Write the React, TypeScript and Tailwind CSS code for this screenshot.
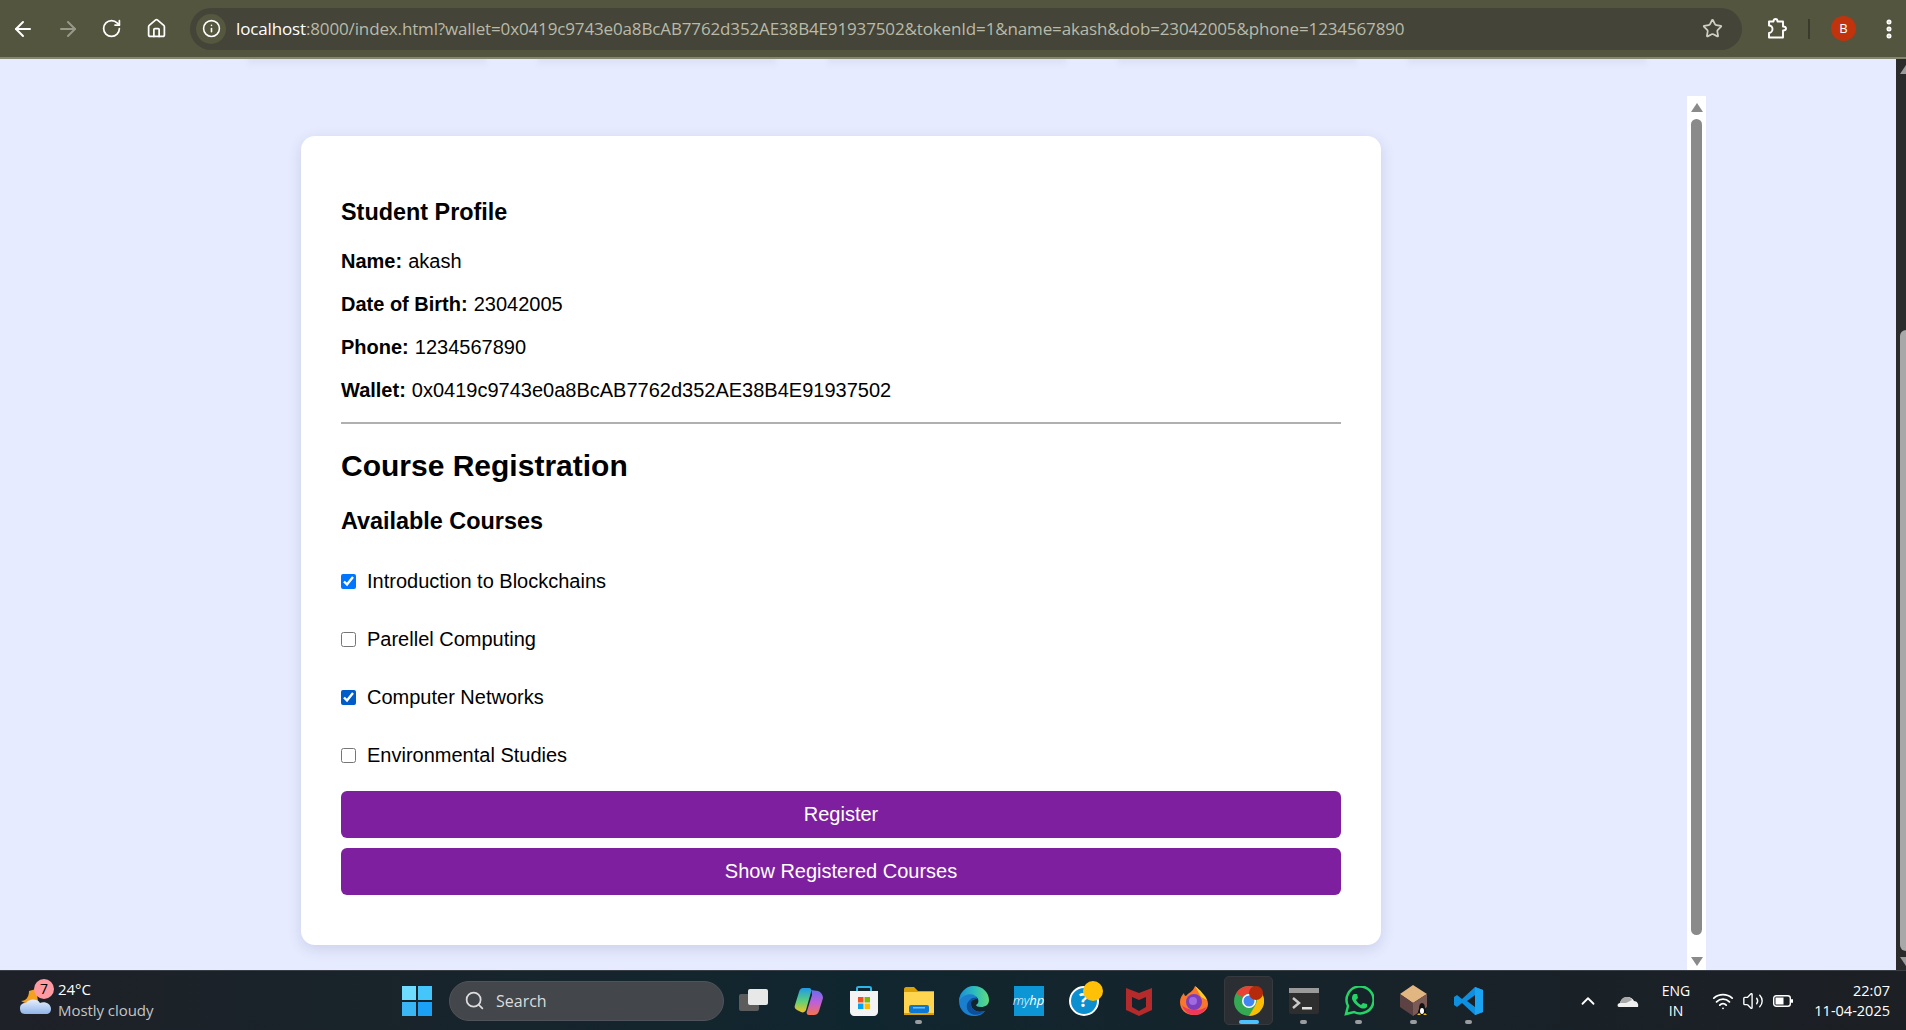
import type { ReactNode } from 'react';
import { ArrowLeft, ArrowRight, RotateCw, Home, Info, Star, EllipsisVertical, Search, ChevronUp, Wifi, Volume2 } from 'lucide-react';

const courses = [
  { name: 'Introduction to Blockchains', checked: true, accent: 'accent-[#0075ff]' },
  { name: 'Parellel Computing', checked: false, accent: 'accent-[#0075ff]' },
  { name: 'Computer Networks', checked: true, accent: 'accent-[#005cc8]' },
  { name: 'Environmental Studies', checked: false, accent: 'accent-[#0075ff]' },
];

const profile = [
  ['Name:', 'akash'],
  ['Date of Birth:', '23042005'],
  ['Phone:', '1234567890'],
  ['Wallet:', '0x0419c9743e0a8BcAB7762d352AE38B4E91937502'],
];

function Toolbar() {
  return (
    <header className="h-[59px] shrink-0 flex items-center bg-[#54553f] border-b-2 border-[#85866f] font-['Open_Sans',sans-serif]">
      <div className="w-[190px] shrink-0 flex items-center pl-[11px] gap-[21px] text-white">
        <ArrowLeft size={24} strokeWidth={2} />
        <ArrowRight size={24} strokeWidth={2} className="text-[#98998a]" />
        <RotateCw size={21} strokeWidth={2} />
        <Home size={21} strokeWidth={2} className="ml-[3px]" />
      </div>
      <div className="w-[1552px] h-[42px] shrink-0 rounded-full bg-[#444438] flex items-center pl-[6px] pr-[19px]">
        <div className="w-[30px] h-[30px] rounded-full bg-[#56573f] flex items-center justify-center text-white">
          <Info size={19} strokeWidth={2} />
        </div>
        <div className="ml-[10px] flex-1 text-[17px] tracking-[-0.14px] text-[#b9baa9] whitespace-nowrap">
          <span className="text-white">localhost</span>:8000/index.html?wallet=0x0419c9743e0a8BcAB7762d352AE38B4E91937502&tokenId=1&name=akash&dob=23042005&phone=1234567890
        </div>
        <Star size={21} strokeWidth={2} className="text-[#cfcfc2]" />
      </div>
      <div className="flex-1 flex items-center text-white pl-[24px]">
        <svg width="21" height="21" viewBox="0 0 21 21" fill="none" stroke="currentColor" strokeWidth="1.9" strokeLinejoin="round">
          <path d="M3 3.500 H7.500 C7.500 1.500 8.500 1 9.500 1 C10.500 1 11.500 1.500 11.500 3.500 H17 V8.500 C19 8.500 20 9.500 20 10.500 C20 11.500 19 12.500 17 12.500 V19.500 H3 V15 C5 15 6.500 13 6.500 11 C6.500 9 5 7.500 3 7.500 Z" />
        </svg>
        <div className="w-[2px] h-[20px] bg-[#3a3b2c] ml-[21px]" />
        <div className="w-[25px] h-[25px] rounded-full bg-[#c1330c] ml-[21px] flex items-center justify-center text-[13px]">B</div>
        <EllipsisVertical size={24} strokeWidth={3} className="ml-[21px]" />
      </div>
    </header>
  );
}

function Card() {
  return (
    <section className="w-[1080px] h-[809px] mt-[77px] shrink-0 bg-white rounded-[14px] px-10 pt-[62px] shadow-[0_4px_14px_rgba(60,70,120,0.16)] font-['Liberation_Sans',sans-serif] text-black">
      <h3 className="text-[23.4px] leading-[28px] font-bold mb-[13px]">Student Profile</h3>
      {profile.map(([label, value]) => (
        <p key={label} className="h-[43px] flex items-center text-[20px] gap-[6px] whitespace-nowrap">
          <strong>{label}</strong>
          <span>{value}</span>
        </p>
      ))}
      <hr className="mt-[11px] border-0 h-[2px] bg-[#b0b0b0]" />
      <h2 className="mt-[24px] text-[30px] leading-[36px] font-bold">Course Registration</h2>
      <h3 className="mt-[23px] text-[23.4px] leading-[28px] font-bold">Available Courses</h3>
      <div className="mt-[17px]">
        {courses.map((course) => (
          <label key={course.name} className="h-[58px] flex items-center gap-[11px] text-[20px]">
            <input type="checkbox" defaultChecked={course.checked} className={`w-[15px] h-[15px] ${course.accent}`} />
            <span>{course.name}</span>
          </label>
        ))}
      </div>
      <button className="mt-[7px] w-full h-[47px] pb-[2px] rounded-[6px] bg-[#7e1fa0] text-white text-[20px]">Register</button>
      <button className="mt-[10px] w-full h-[47px] pb-[2px] rounded-[6px] bg-[#7e1fa0] text-white text-[20px]">Show Registered Courses</button>
    </section>
  );
}

function InnerScrollbar() {
  return (
    <div className="ml-[306px] mt-[37px] w-[19px] shrink-0 bg-white flex flex-col items-center">
      <div className="mt-[7px] w-0 h-0 border-x-[6px] border-x-transparent border-b-[9px] border-b-[#8a8a8a]" />
      <div className="mt-[7px] w-[11px] flex-1 rounded-full bg-[#8a8a8a]" />
      <div className="mt-[22px] mb-[4px] w-0 h-0 border-x-[6px] border-x-transparent border-t-[9px] border-t-[#8a8a8a]" />
    </div>
  );
}

// the window's own scrollbar runs off the right edge of the shot
function OuterScrollbar() {
  return (
    <div className="ml-auto w-[10px] shrink-0 bg-[#2b2b2b] overflow-hidden">
      <div className="w-[20px] h-full flex flex-col items-center">
        <div className="mt-[6px] w-0 h-0 border-x-[6px] border-x-transparent border-b-[9px] border-b-[#9a9a9a]" />
        <div className="mt-[256px] w-[12px] flex-1 rounded-full bg-[#a8a8a8]" />
        <div className="mt-[6px] mb-[4px] w-0 h-0 border-x-[6px] border-x-transparent border-t-[9px] border-t-[#9a9a9a]" />
      </div>
    </div>
  );
}

function Weather() {
  return (
    <div className="w-[402px] shrink-0 flex items-center pl-[19px]">
      <div className="relative w-[33px] h-[44px] shrink-0">
        <svg width="33" height="44" viewBox="0 0 33 44">
          <defs>
            <linearGradient id="cloud" x1="0" y1="0" x2="0" y2="1">
              <stop offset="0" stopColor="#e6eefc" />
              <stop offset="1" stopColor="#8fb4ea" />
            </linearGradient>
          </defs>
          <path d="M2 22 C6 22 10 19 10 12 L17 10 L19 22 L10 26 Z" fill="#f3a11f" />
          <path d="M6 35 C2 35 1 32 1 29 C1 26 3 24 7 24 C9 20 18 19 21 24 C26 22 32 25 32 30 C32 33 30 35 27 35 Z" fill="url(#cloud)" />
        </svg>
        <div className="absolute left-[15px] top-0 w-[20px] h-[20px] rounded-full bg-[#ff9aa2] text-black text-[14px] flex items-center justify-center">7</div>
      </div>
      <div className="ml-[6px] -mt-[1px] text-[15px] leading-[21px] tracking-[-0.05px]">
        <div className="text-white">24°C</div>
        <div className="text-[#c4c5c7]">Mostly cloudy</div>
      </div>
    </div>
  );
}

function AppSlot({ children, dot, active }: { children: ReactNode; dot?: boolean; active?: boolean }) {
  return (
    <div className={`relative w-[49px] h-[49px] mx-[3px] rounded-[5px] flex items-center justify-center ${active ? 'bg-[#2b2f34] border border-[#363a3f]' : ''}`}>
      {children}
      {dot && <div className="absolute bottom-[1px] left-[21px] w-[7px] h-[4px] rounded-full bg-[#9a9da0]" />}
      {active && <div className="absolute bottom-0 left-[14px] w-[20px] h-[4px] rounded-full bg-[#4cc2ff]" />}
    </div>
  );
}

function TaskApps() {
  return (
    <div className="flex items-center">
      <AppSlot>
        <svg width="32" height="32" viewBox="0 0 32 32">
          <rect x="1" y="9" width="20" height="17" rx="2" fill="#5c5c5c" />
          <rect x="10" y="4" width="20" height="16" rx="2" fill="#e8e8e8" />
        </svg>
      </AppSlot>
      <AppSlot>
        <svg width="30" height="30" viewBox="0 0 30 30">
          <defs>
            <linearGradient id="copilotA" x1="0.500" y1="0" x2="0.500" y2="1">
              <stop offset="0" stopColor="#1f9ae8" />
              <stop offset="0.550" stopColor="#5fd07a" />
              <stop offset="1" stopColor="#f5c21f" />
            </linearGradient>
            <linearGradient id="copilotB" x1="0.500" y1="0" x2="0.500" y2="1">
              <stop offset="0" stopColor="#6a6cf0" />
              <stop offset="0.500" stopColor="#c05fd8" />
              <stop offset="1" stopColor="#f5734e" />
            </linearGradient>
          </defs>
          <path d="M9 2 H15 C17 2 18 4 17 6 L12 24 C11 26 9 27 7 26 L3 24 C1 23 0 21 1 19 L5 6 C6 3 7 2 9 2 Z" fill="url(#copilotA)" />
          <path d="M17 4 L24 5 C27 6 29 9 29 12 L25 25 C24 28 22 29 20 29 H15 C13 29 12 27 13 25 L18 9 C18 7 18 5 17 4 Z" fill="url(#copilotB)" />
        </svg>
      </AppSlot>
      <AppSlot>
        <svg width="30" height="30" viewBox="0 0 30 30">
          <path d="M8 6 V2 C8 1 9 1 9.500 1 H20.500 C21 1 22 1 22 2 V6" fill="none" stroke="#2db4e8" strokeWidth="2" />
          <path d="M1 5 H29 V26 C29 28 27 30 25 30 H5 C3 30 1 28 1 26 Z" fill="#f4f4f4" />
          <rect x="9" y="11" width="5.500" height="5.500" fill="#f25022" />
          <rect x="15.500" y="11" width="5.500" height="5.500" fill="#7fba00" />
          <rect x="9" y="17.500" width="5.500" height="5.500" fill="#00a4ef" />
          <rect x="15.500" y="17.500" width="5.500" height="5.500" fill="#ffb900" />
        </svg>
      </AppSlot>
      <AppSlot dot>
        <svg width="30" height="28" viewBox="0 0 30 28">
          <path d="M0 2 C0 1 1 0 2 0 H10 L14 4 H30 V27 H0 Z" fill="#d9a007" />
          <rect x="0" y="5" width="30" height="21" fill="#ffd54f" />
          <rect x="5" y="18" width="20" height="8" rx="2" fill="#0a78d4" />
          <rect x="9" y="20" width="12" height="1.500" fill="#6cc0f5" />
          <rect x="0" y="26" width="30" height="2" fill="#d9a007" />
        </svg>
      </AppSlot>
      <AppSlot>
        <svg width="30" height="30" viewBox="0 0 30 30">
          <defs>
            <linearGradient id="edgeTop" x1="0" y1="0.500" x2="1" y2="0.500">
              <stop offset="0" stopColor="#1b8ed8" />
              <stop offset="0.550" stopColor="#2ebfb8" />
              <stop offset="1" stopColor="#62da7c" />
            </linearGradient>
          </defs>
          <path d="M15 0 A15 15 0 0 0 0 15 C0 24 7 30 15 30 C20 30 24 28 26 25 C20 27 13 25 12 19 C11 15 14 13 18 13 Z" fill="#1b7fd0" />
          <path d="M12 19 C13 25 20 27 26 25 C22 29 15 30 11 27 C7 24 6 17 12 13 C15 11 18 12 18 13 C14 13 11 15 12 19 Z" fill="#0d4f9a" />
          <path d="M15 0 C24 0 30 7 30 14 C30 19 26 21 22 21 C19 21 17 20 17 19 C19 18 20 16 19 13 C17 8 10 7 5 10 C3 11 1 13 0 15 C1 6 8 0 15 0 Z" fill="url(#edgeTop)" />
        </svg>
      </AppSlot>
      <AppSlot>
        <div className="w-[30px] h-[30px] bg-[#0d96d6] flex items-center justify-center text-white text-[13px] italic font-['Open_Sans',sans-serif]">
          <span className="font-light">my</span>
          <span>hp</span>
        </div>
      </AppSlot>
      <AppSlot>
        <div className="relative w-[30px] h-[30px] rounded-full bg-[#0b8fd0] border-[2px] border-white flex items-center justify-center text-white text-[19px] font-bold">
          ?
          <div className="absolute -right-[6px] -top-[7px] w-[20px] h-[20px] rounded-full bg-[#ffc107]" />
        </div>
      </AppSlot>
      <AppSlot>
        <svg width="28" height="30" viewBox="0 0 28 30">
          <path d="M1 2 L14 7 L27 2 V24 L14 30 L1 24 Z M7 11 V21 L14 25 L21 21 V11 L14 14 Z" fillRule="evenodd" fill="#b52a2a" />
        </svg>
      </AppSlot>
      <AppSlot>
        <svg width="28" height="30" viewBox="0 0 28 30">
          <path d="M14 29 C5 29 0 23 0 16 C0 12 2 9 4 7 C4 9 5 10 6 10 C8 7 13 6 15 0 C20 4 21 6 22 8 C26 11 28 14 28 18 C28 24 22 29 14 29 Z" fill="#f9762c" />
          <path d="M15 0 C20 4 25 9 27 14 L21 11 Z" fill="#ffca28" />
          <path d="M2 19 C4 26 10 29 14 29 C20 29 25 26 27 20 C23 25 8 26 2 19 Z" fill="#f0385d" />
          <circle cx="14" cy="16" r="8" fill="#7b3fbe" />
          <circle cx="13" cy="15" r="4" fill="#a06ae0" />
        </svg>
      </AppSlot>
      <AppSlot active>
        <svg width="30" height="30" viewBox="0 0 30 30">
          <circle cx="15" cy="15" r="15" fill="#34a853" />
          <path d="M15 0 A15 15 0 0 1 28 7.500 H15 A7.500 7.500 0 0 0 8.500 11 L2 7.500 A15 15 0 0 1 15 0 Z" fill="#ea4335" />
          <path d="M28 7.500 A15 15 0 0 1 15 30 L21.500 19 A7.500 7.500 0 0 0 21.500 11 Z" fill="#fbbc05" />
          <circle cx="15" cy="15" r="7" fill="white" />
          <circle cx="15" cy="15" r="5.500" fill="#4285f4" />
          <circle cx="22" cy="7" r="7" fill="#b52a0b" />
        </svg>
      </AppSlot>
      <AppSlot dot>
        <svg width="30" height="26" viewBox="0 0 30 26">
          <rect width="30" height="26" rx="2" fill="#2e2e2e" />
          <rect width="30" height="5" fill="#9a9a9a" />
          <path d="M4 10 L10 15 L4 20" fill="none" stroke="#c8c8c8" strokeWidth="2.500" />
          <rect x="13" y="19" width="10" height="2.500" fill="#e0e0e0" />
        </svg>
      </AppSlot>
      <AppSlot dot>
        <svg width="30" height="30" viewBox="0 0 30 30">
          <path d="M2 28 L4 20 A13.500 13.500 0 1 1 10 26 Z" fill="none" stroke="#25d366" strokeWidth="2.500" />
          <path d="M10 8 L13 8 L14 12 L12 14 C13 16 15 18 17 19 L19 17 L23 18 L23 21 C21 23 18 23 15 21 C12 19 9 16 8 13 C8 11 8 9 10 8 Z" fill="#25d366" />
        </svg>
      </AppSlot>
      <AppSlot dot>
        <svg width="30" height="32" viewBox="0 0 30 32">
          <path d="M1 9 L14 0 L28 9 L14 18 Z" fill="#e2b681" />
          <path d="M1 9 L14 18 V31 L1 22 Z" fill="#5c4242" />
          <path d="M28 9 L14 18 V31 L28 22 Z" fill="#7c5a56" />
          <path d="M20 30 C18 30 19 26 20 24 C20 20 21 18 23 18 C25 18 26 20 26 24 C27 26 28 30 26 30 Z" fill="#111" />
          <ellipse cx="23" cy="26" rx="2" ry="3" fill="#fff" />
          <path d="M18 30 H22 L20 28 Z M24 30 H28 L26 28 Z" fill="#f5c518" />
        </svg>
      </AppSlot>
      <AppSlot dot>
        <svg width="30" height="30" viewBox="0 0 30 30">
          <path d="M21 1 L29 4 V26 L21 29 L8 17 L3 21 L0 19 V11 L3 9 L8 13 Z M21 9 L13 15 L21 21 Z" fillRule="evenodd" fill="#0f8fe0" />
          <path d="M21 1 L29 4 V26 L21 29 Z" fill="#1aa3f0" />
        </svg>
      </AppSlot>
    </div>
  );
}

function Taskbar() {
  return (
    <footer className="h-[60px] shrink-0 flex items-center bg-gradient-to-r from-[#1e2127] via-[#10262f] via-45% to-[#1c1f24] border-t border-[#3a3f45] text-white font-['Open_Sans',sans-serif]">
      <Weather />
      <svg width="30" height="30" viewBox="0 0 30 30" className="shrink-0 mr-[17px]">
        <rect width="14" height="14" fill="#6fdcff" />
        <rect x="16" width="14" height="14" fill="#45c6fb" />
        <rect y="16" width="14" height="14" fill="#3ab6f5" />
        <rect x="16" y="16" width="14" height="14" fill="#1aa0f5" />
      </svg>
      <div className="w-[275px] h-[40px] shrink-0 rounded-full bg-[#43464b] border border-[#50535a] flex items-center pl-[14px] text-[#dcdcdc] text-[16px]">
        <Search size={21} strokeWidth={2} />
        <span className="ml-[11px]">Search</span>
      </div>
      <div className="ml-[2px]">
        <TaskApps />
      </div>
      <div className="ml-auto flex items-center shrink-0">
        <ChevronUp size={22} strokeWidth={2} />
        <svg width="22" height="14" viewBox="0 0 22 14" className="ml-[18px]">
          <path d="M2 13 C0 13 0 9 3 9 C4 5 7 3 10 3 C14 3 16 5 17 7 C20 7 22 10 21 13 Z" fill="#f0f0f0" />
          <path d="M3 9 C4 5 7 3 10 3 C12 3 14 4 15 6 L9 9 Z" fill="#a8a8a8" />
        </svg>
        <div className="w-[48px] ml-[13px] text-center text-[14px] leading-[20px]">
          <div>ENG</div>
          <div>IN</div>
        </div>
        <Wifi size={22} strokeWidth={2} className="ml-[12px]" />
        <Volume2 size={22} strokeWidth={1.5} className="ml-[8px]" />
        <svg width="20" height="12" viewBox="0 0 20 12" className="ml-[9px]">
          <rect x="0.700" y="0.700" width="16.600" height="10.600" rx="2.500" fill="none" stroke="white" strokeWidth="1.400" />
          <rect x="2.500" y="2.500" width="8" height="7" fill="white" />
          <rect x="18" y="4" width="2" height="4" rx="1" fill="white" />
        </svg>
        <div className="w-[78px] ml-[19px] mr-[16px] text-right text-[14.5px] leading-[20px] whitespace-nowrap">
          <div>22:07</div>
          <div>11-04-2025</div>
        </div>
      </div>
    </footer>
  );
}

export default function App() {
  return (
    <div className="w-[1906px] h-[1030px] flex flex-col overflow-hidden">
      <Toolbar />
      <main className="relative flex-1 min-h-0 flex bg-[#e6ebff] pl-[301px] overflow-hidden">
        {/* shadows of the cards scrolled away above the fold */}
        <div className="absolute -top-[2px] left-[248px] flex gap-[52px]">
          {[0, 1, 2, 3, 4].map((i) => (
            <div key={i} className="w-[238px] h-[10px] bg-gradient-to-b from-[#d8ddf2] to-transparent blur-[2px]" />
          ))}
        </div>
        <Card />
        <InnerScrollbar />
        <OuterScrollbar />
      </main>
      <Taskbar />
    </div>
  );
}
